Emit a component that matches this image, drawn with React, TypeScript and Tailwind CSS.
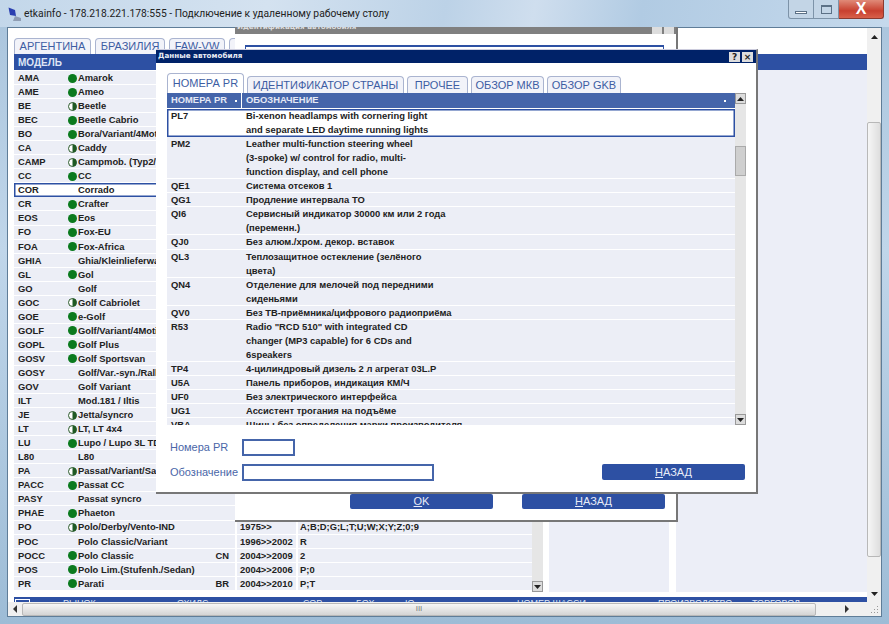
import React from 'react';

type Mark = 'g' | 'h' | '';

const models: [string, Mark, string, string?, string?, string?][] = [
  ['AMA', 'g', 'Amarok'], ['AME', 'g', 'Ameo'], ['BE', 'h', 'Beetle'], ['BEC', 'g', 'Beetle Cabrio'],
  ['BO', 'g', 'Bora/Variant/4Motion'], ['CA', 'h', 'Caddy'], ['CAMP', 'h', 'Campmob. (Typ2/T3)'], ['CC', 'g', 'CC'],
  ['COR', '', 'Corrado'], ['CR', 'g', 'Crafter'], ['EOS', 'g', 'Eos'], ['FO', 'g', 'Fox-EU'],
  ['FOA', 'g', 'Fox-Africa'], ['GHIA', '', 'Ghia/Kleinlieferwagen'], ['GL', 'g', 'Gol'], ['GO', '', 'Golf'],
  ['GOC', 'h', 'Golf Cabriolet'], ['GOE', 'g', 'e-Golf'], ['GOLF', 'g', 'Golf/Variant/4Motion'], ['GOPL', 'g', 'Golf Plus'],
  ['GOSV', 'g', 'Golf Sportsvan'], ['GOSY', '', 'Golf/Var.-syn./Rallye'], ['GOV', '', 'Golf Variant'], ['ILT', '', 'Mod.181 / Iltis'],
  ['JE', 'h', 'Jetta/syncro'], ['LT', 'h', 'LT, LT 4x4'], ['LU', 'g', 'Lupo / Lupo 3L TDI'], ['L80', '', 'L80'],
  ['PA', 'h', 'Passat/Variant/Santana'], ['PACC', 'g', 'Passat CC'], ['PASY', '', 'Passat syncro'], ['PHAE', 'g', 'Phaeton'],
  ['PO', 'h', 'Polo/Derby/Vento-IND', '', '1975>>', 'A;B;D;G;L;T;U;W;X;Y;Z;0;9'],
  ['POC', '', 'Polo Classic/Variant', '', '1996>>2002', 'R'],
  ['POCC', 'g', 'Polo Classic', 'CN', '2004>>2009', '2'],
  ['POS', 'g', 'Polo Lim.(Stufenh./Sedan)', '', '2004>>2006', 'P;0'],
  ['PR', 'g', 'Parati', 'BR', '2004>>2010', 'P;T'],
];

const prRows: [string, string[], string][] = [
  ['PL7', ['Bi-xenon headlamps with cornering light', 'and separate LED daytime running lights'], 'h-[28.12px]'],
  ['PM2', ['Leather multi-function steering wheel', '(3-spoke) w/ control for radio, multi-', 'function display, and cell phone'], 'h-[42.18px]'],
  ['QE1', ['Система отсеков 1'], 'h-[14.06px]'],
  ['QG1', ['Продление интервала ТО'], 'h-[14.06px]'],
  ['QI6', ['Сервисный индикатор 30000 км или 2 года', '(переменн.)'], 'h-[28.12px]'],
  ['QJ0', ['Без алюм./хром. декор. вставок'], 'h-[14.06px]'],
  ['QL3', ['Теплозащитное остекление (зелёного', 'цвета)'], 'h-[28.12px]'],
  ['QN4', ['Отделение для мелочей под передними', 'сиденьями'], 'h-[28.12px]'],
  ['QV0', ['Без ТВ-приёмника/цифрового радиоприёма'], 'h-[14.06px]'],
  ['R53', ['Radio "RCD 510" with integrated CD', 'changer (MP3 capable) for 6 CDs and', '6speakers'], 'h-[42.18px]'],
  ['TP4', ['4-цилиндровый дизель 2 л агрегат 03L.P'], 'h-[14.06px]'],
  ['U5A', ['Панель приборов, индикация КМ/Ч'], 'h-[14.06px]'],
  ['UF0', ['Без электрического интерфейса'], 'h-[14.06px]'],
  ['UG1', ['Ассистент трогания на подъёме'], 'h-[14.06px]'],
  ['VBA', ['Шины без определения марки производителя'], 'h-[14.06px]'],
];

const Dot = ({ mark }: { mark: Mark }) => {
  if (mark === 'g') return <span className="h-[9px] w-[9px] shrink-0 rounded-full bg-[#0b7a1e]" />;
  if (mark === 'h')
    return (
      <svg width="9" height="9" viewBox="0 0 9 9" className="shrink-0">
        <circle cx="4.5" cy="4.5" r="4" fill="#fff" stroke="#2c5a2c" />
        <path d="M4.5 .5a4 4 0 0 1 0 8z" fill="#1f5a24" />
      </svg>
    );
  return <span className="h-[9px] w-[9px] shrink-0" />;
};

const Arrow = ({ up }: { up?: boolean }) => (
  <svg width="7" height="4" viewBox="0 0 7 4">
    <path d={up ? 'M3.5 0 7 4H0z' : 'M0 0h7L3.5 4z'} fill="#222" />
  </svg>
);

const Tab = ({ label, className }: { label: string; className: string }) => (
  <div className={`flex items-center justify-center rounded-t-[4px] border border-b-0 border-[#aab4d0] bg-[#f2f3f9] text-[11px] text-[#3d5da3] ${className}`}>
    {label}
  </div>
);

const Btn = ({ label, className }: { label: string; className: string }) => (
  <div className={`absolute flex items-center justify-center rounded-[2px] bg-[#2d50a3] text-[11px] text-[#e8ecf8] ${className}`}>
    <span><span className="underline">{label[0]}</span>{label.slice(1)}</span>
  </div>
);

const ModelRow = ({ row }: { row: (typeof models)[number] }) => {
  const [code, mark, name, country, years, codes] = row;
  const selected = code === 'COR';
  return (
    <div className="flex h-[14.06px] gap-[2px]">
      <div className={`flex w-[221px] items-center pl-[4px] pr-[6px] ${selected ? 'bg-white shadow-[inset_0_0_0_1.5px_#2d50a3]' : 'bg-[#eceef6] shadow-[inset_0_-1px_0_#fff]'}`}>
        <span className="w-[50px] shrink-0">{code}</span>
        <Dot mark={mark} />
        <span className="ml-[1px] min-w-0 flex-1 truncate">{name}</span>
        <span className="ml-1">{country}</span>
      </div>
      <div className="flex w-[59px] items-center bg-[#eceef6] pl-[3px] shadow-[inset_0_-1px_0_#fff]">{years}</div>
      <div className="flex w-[234px] items-center bg-[#eceef6] pl-[2px] shadow-[inset_0_-1px_0_#fff]">{codes}</div>
    </div>
  );
};

const PrRow = ({ code, lines, h, active }: { code: string; lines: string[]; h: string; active?: boolean }) => (
  <div className={`flex shrink-0 ${h} ${active ? 'bg-white shadow-[inset_0_0_0_1.5px_#2d50a3]' : 'bg-[#eceef6] shadow-[inset_0_-1px_0_#fff]'}`}>
    <div className="w-[74px] shrink-0 pl-[4px] leading-[14px]">{code}</div>
    <div className="flex-1 pl-[5px]">
      {lines.map((l) => (
        <div key={l} className="h-[14.06px] whitespace-nowrap leading-[14px]">{l}</div>
      ))}
    </div>
  </div>
);

const Field = ({ top, label, width }: { top: string; label: string; width: string }) => (
  <div className={`absolute left-[14px] flex h-[17px] items-center ${top}`}>
    <span className="w-[72px] overflow-hidden whitespace-nowrap text-[11px] text-[#4a66a8]">{label}</span>
    <span className={`h-[17px] border-2 border-[#4565aa] bg-white ${width}`} />
  </div>
);

export default function App() {
  return (
    <div className="relative h-[624px] w-[889px] overflow-hidden bg-[linear-gradient(180deg,#a9c4dc,#c0d6ea_40%,#9dbcd6)] font-['Liberation_Sans',sans-serif]">
      {/* remote desktop window title */}
      <div className="flex h-[27px] items-center bg-[linear-gradient(100deg,#c3d7ea_0%,#d4e2f0_30%,#bcd2e7_50%,#cfdeee_60%,#b1cbe3_72%,#c5d9ec_100%)] pl-[7px]">
        <svg width="16" height="16" viewBox="0 0 16 16">
          <path d="M1.5 1.5 8 4l1 6-6-1z" fill="#2a3fb0" />
          <path d="M8 10l6 2v3H6z" fill="#8f9db3" />
        </svg>
        <span className="ml-[1px] font-['Roboto',sans-serif] text-[10.3px] text-[#222]">
          etkainfo - 178.218.221.178:555 - Подключение к удаленному рабочему столу
        </span>
        <div className="absolute right-[5px] top-0 flex h-[19px]">
          <div className="flex w-[26px] items-end justify-center rounded-bl-[3px] border border-t-0 border-[#7d93a8] bg-[#c3d5e6] pb-[4px]">
            <span className="h-[3px] w-[12px] border border-[#5c7186] bg-white" />
          </div>
          <div className="flex w-[25px] items-center justify-center border-b border-r border-[#7d93a8] bg-[#c3d5e6]">
            <span className="h-[9px] w-[11px] border border-t-2 border-[#5c7186]" />
          </div>
          <div className="flex w-[45px] items-center justify-center rounded-br-[3px] border-b border-r border-[#8a3a30] bg-[linear-gradient(180deg,#e08a78,#c8402f_60%,#d8604a)] text-[16px] font-bold text-white">
            X
          </div>
        </div>
      </div>

      {/* client area */}
      <div className="mx-[7px] flex h-[590px] flex-col border border-[#5f7d98] bg-white">
        <div className="flex min-h-0 flex-1">
          <div className="flex min-w-0 flex-1 flex-col overflow-hidden pl-[6px]">
            <div className="mt-[9px] flex h-[17px] shrink-0 items-end gap-[4px]">
              <Tab label="АРГЕНТИНА" className="h-[16px] w-[77px]" />
              <Tab label="БРАЗИЛИЯ" className="h-[16px] w-[70px]" />
              <Tab label="FAW-VW" className="h-[16px] w-[56px]" />
              <Tab label="" className="h-[16px] w-[10px]" />
            </div>
            <div className="flex h-[16px] shrink-0 items-center bg-[#2d50a3] pl-[4px] text-[10px] font-bold text-[#dfe5f5]">
              МОДЕЛЬ
            </div>
            <div className="flex min-h-0 flex-1 gap-[6px]">
              <div className="flex">
                <div className="pt-[1px] text-[9.4px] font-bold text-[#222]">
                  {models.map((r) => <ModelRow key={r[0]} row={r} />)}
                </div>
                <div className="flex h-[522px] w-[11px] flex-col justify-end bg-[#e6e6e6]">
                  <div className="flex h-[11px] items-center justify-center border border-[#999] bg-[#dcdcdc]"><Arrow /></div>
                </div>
              </div>
              <div className="h-[522px] w-[120px] bg-[#eceef7]" />
              <div className="ml-[1px] h-[522px] flex-1 bg-[#eceef7]" />
            </div>
            <div className="mt-[5px] flex h-[5px] shrink-0 overflow-hidden whitespace-nowrap bg-[#2d50a3] pt-[2px] text-[9px] leading-[9px] text-[#dfe5f5]">
              <span className="ml-[1px] h-[10px] w-[15px] shrink-0 border border-white" />
              <span className="ml-[33px] w-[114px] shrink-0">РЫНОК</span>
              <span className="w-[126px] shrink-0">ОХИЛС</span>
              <span className="w-[53px] shrink-0">СОР</span>
              <span className="w-[49px] shrink-0">БОХ</span>
              <span className="w-[112px] shrink-0">IO</span>
              <span className="w-[141px] shrink-0">НОМЕР ШАССИ</span>
              <span className="w-[94px] shrink-0">ПРОИЗВОДСТВО</span>
              <span className="shrink-0">ТОРГОВОЛ</span>
            </div>
          </div>
          {/* right scrollbar */}
          <div className="flex w-[14px] shrink-0 flex-col bg-[#f0f0f0]">
            <div className="flex h-[17px] items-center justify-center"><Arrow up /></div>
            <div className="mt-[77px] h-[435px] rounded-[2px] border border-[#b8b8b8] bg-[linear-gradient(90deg,#f6f6f6,#dedede)]" />
            <div className="flex-1" />
            <div className="flex h-[17px] items-center justify-center"><Arrow /></div>
          </div>
        </div>
        {/* bottom scrollbar */}
        <div className="flex h-[14px] shrink-0 items-center bg-[#f0f0f0]">
          <div className="flex w-[14px] justify-center"><span className="h-0 w-0 border-y-[4px] border-r-[4px] border-y-transparent border-r-[#333]" /></div>
          <div className="flex h-[13px] w-[794px] items-center justify-center rounded-[2px] border border-[#b8b8b8] bg-[linear-gradient(180deg,#f6f6f6,#d4d4d4)] text-[8px] text-[#777]">III</div>
          <div className="flex flex-1 justify-end pr-[21px]"><span className="h-0 w-0 border-y-[4px] border-l-[4px] border-y-transparent border-l-[#333]" /></div>
          <svg width="9" height="9" viewBox="0 0 9 9" className="mr-[2px]">
            <path d="M7 1h1v1H7zM4 4h1v1H4zM7 4h1v1H7zM1 7h1v1H1zM4 7h1v1H4zM7 7h1v1H7z" fill="#999" />
          </svg>
        </div>
      </div>

      {/* vehicle identification dialog, behind */}
      <div className="absolute left-[235px] top-[27px] h-[495px] w-[443px] border-b-2 border-r-2 border-[#777] bg-white">
        <div className="relative flex h-[7px] items-start justify-end overflow-hidden bg-[#808080] pr-[2px]">
          <span className="absolute left-[2px] top-[-5px] font-['DejaVu_Sans',sans-serif] text-[7.2px] font-bold text-[#ddd]">Идентификация автомобиля</span>
          <span className="mr-[2px] h-[10px] w-[10px] bg-[#ddd]" />
          <span className="h-[10px] w-[10px] bg-[#ddd]" />
        </div>
        <div className="ml-[10px] mt-[11px] h-[20px] w-[419px] border-x border-t-2 border-[#2d50a3]" />
        <Btn label="OK" className="left-[115px] top-[467px] h-[15px] w-[143px]" />
        <Btn label="НАЗАД" className="left-[287px] top-[467px] h-[15px] w-[143px]" />
      </div>

      {/* vehicle data dialog, front */}
      <div className="absolute left-[156px] top-[49px] flex h-[445px] w-[602px] flex-col border-b-2 border-r-2 border-t border-[#777] border-t-[#ccd] bg-white">
        <div className="flex h-[13px] shrink-0 items-center justify-between bg-[#002268] pl-[2px] pr-[3px] font-['DejaVu_Sans',sans-serif] text-[7.2px] font-bold text-[#e8ecf5]">
          <span>Данные автомобиля</span>
          <div className="flex gap-[2px] text-[9px] leading-[10px] text-[#222]">
            <span className="flex h-[10px] w-[11px] items-center justify-center bg-[#ddd]">?</span>
            <span className="flex h-[10px] w-[11px] items-center justify-center bg-[#ddd]">×</span>
          </div>
        </div>
        <div className="ml-[11px] mt-[10px] flex h-[20px] shrink-0 items-end gap-[3px]">
          <Tab label="НОМЕРА PR" className="h-[20px] w-[77px] !bg-white" />
          <Tab label="ИДЕНТИФИКАТОР СТРАНЫ" className="h-[17px] w-[157px]" />
          <Tab label="ПРОЧЕЕ" className="h-[17px] w-[61px]" />
          <Tab label="ОБЗОР МКВ" className="h-[17px] w-[73px]" />
          <Tab label="ОБЗОР GKB" className="h-[17px] w-[74px]" />
        </div>
        <div className="ml-[11px] flex h-[332px] w-[579px] shrink-0">
          <div className="flex min-w-0 flex-1 flex-col overflow-hidden text-[9.4px] font-bold text-[#222]">
            <div className="flex h-[15px] shrink-0 items-center gap-[1px] text-[#e4e8f5]">
              <div className="flex h-full w-[74px] items-center justify-between bg-[#4565aa] px-[4px]">НОМЕРА PR <span className="h-[2px] w-[2px] bg-white" /></div>
              <div className="flex h-full flex-1 items-center justify-between bg-[#4565aa] pl-[4px] pr-[9px]">ОБОЗНАЧЕНИЕ <span className="h-[2px] w-[2px] bg-white" /></div>
            </div>
            <div className="h-[1px] shrink-0" />
            {prRows.map(([code, lines, h], i) => <PrRow key={code} code={code} lines={lines} h={h} active={i === 0} />)}
          </div>
          <div className="relative flex w-[11px] shrink-0 flex-col bg-[#e6e6e6]">
            <div className="flex h-[11px] items-center justify-center border border-[#999] bg-[#dcdcdc]"><Arrow up /></div>
            <div className="absolute left-0 top-[53px] h-[30px] w-[11px] border border-[#aaa] bg-[#cfcfcf]" />
            <div className="mt-auto flex h-[11px] items-center justify-center border border-[#999] bg-[#dcdcdc]"><Arrow /></div>
          </div>
        </div>
        <Field top="top-[389px]" label="Номера PR" width="w-[53px]" />
        <Field top="top-[414px]" label="Обозначение" width="w-[192px]" />
        <Btn label="НАЗАД" className="left-[446px] top-[414px] h-[16px] w-[143px]" />
      </div>
    </div>
  );
}
